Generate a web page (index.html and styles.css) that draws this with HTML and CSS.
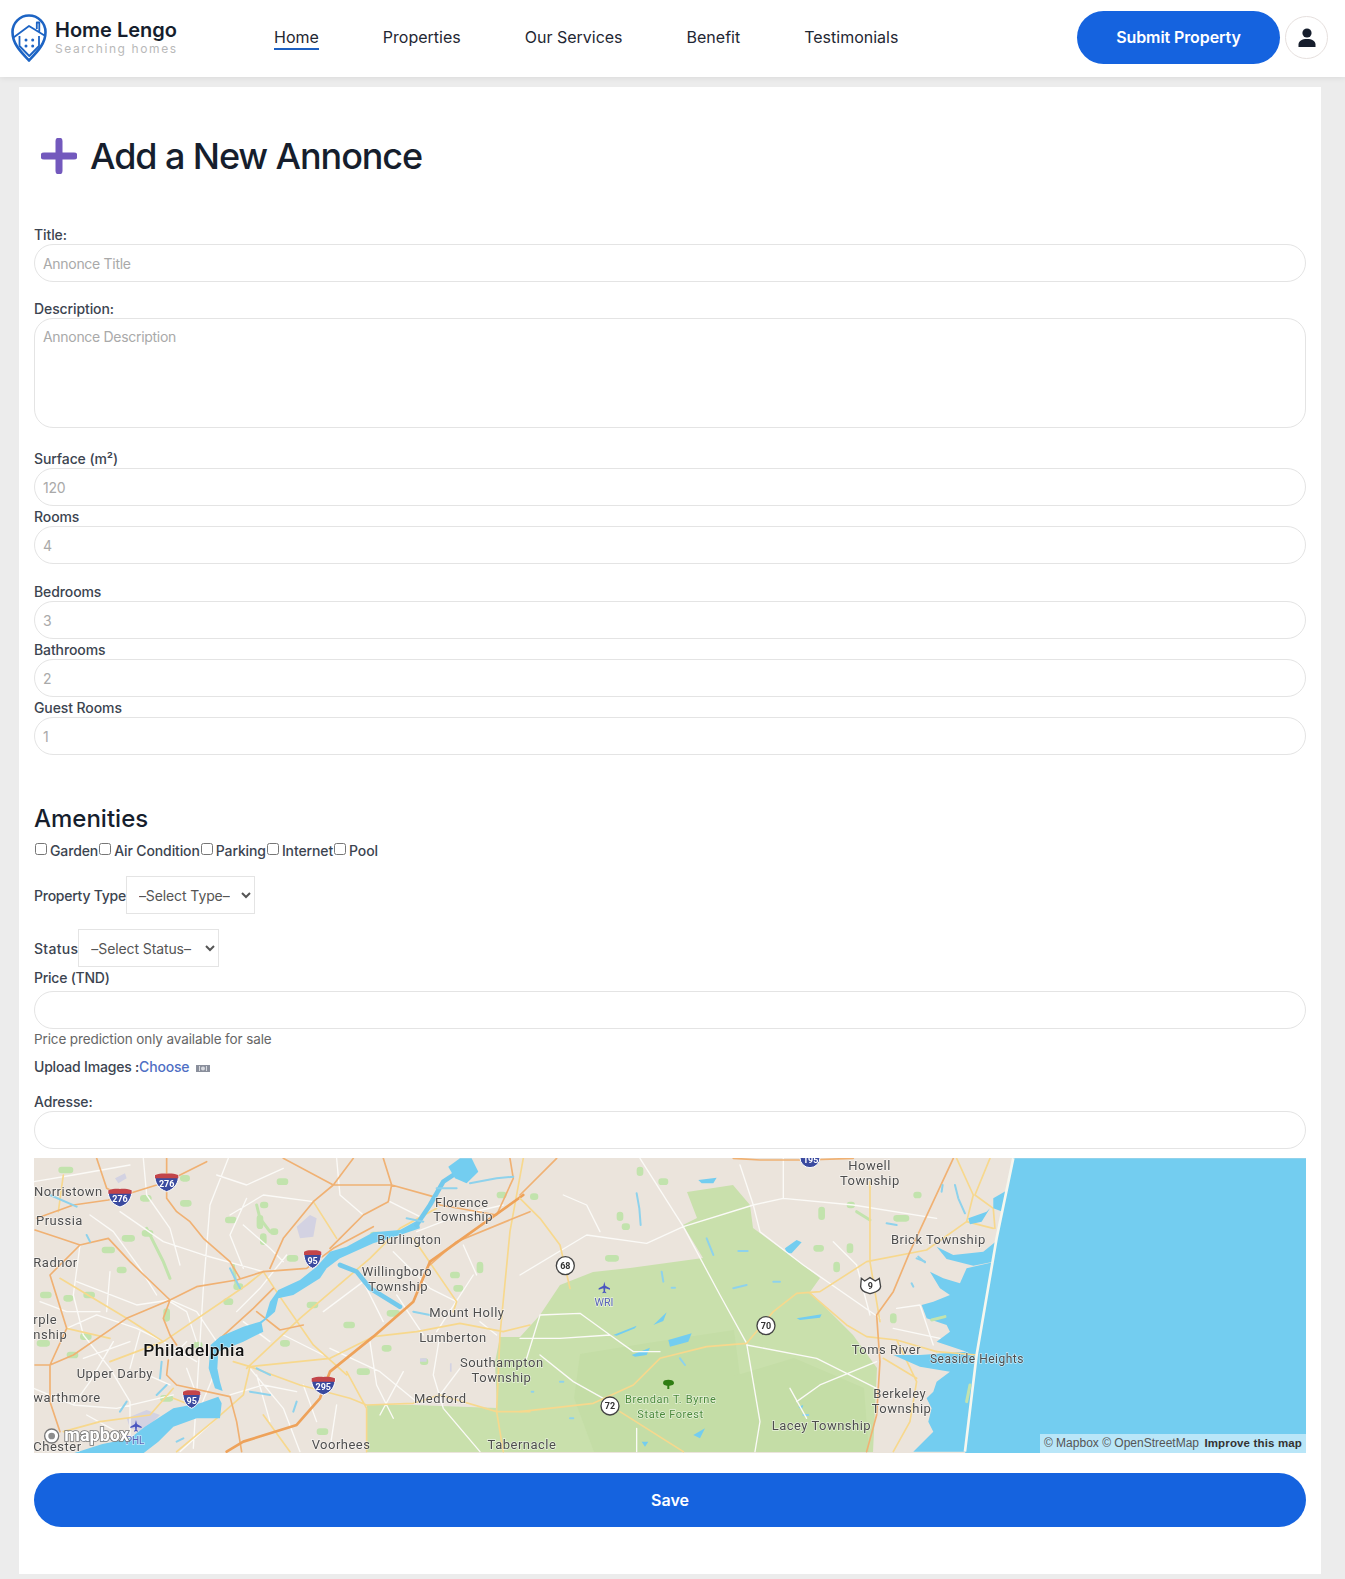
FILE: index.html
```html
<!DOCTYPE html>
<html lang="en">
<head>
    <meta charset="UTF-8">
    <meta name="viewport" content="width=device-width, initial-scale=1.0">
    <title>Home Lengo - Add Annonce</title>
    <link rel="stylesheet" href="styles.css">
</head>
<body>
    <header class="topbar">
        <a class="logo" href="#">
            <svg class="logo-icon" viewBox="0 0 36 48">
                <path class="logo-line" d="M18 46.500C10 38 1.500 30 1.500 18a16.500 16.500 0 0 1 33 0C34.500 30 26 38 18 46.500Z"/>
                <path class="logo-line inner" d="M2.500 23.500 18 12 33.500 21.500M25.800 15V8.500h2.500V19M8.500 22v10l9.800 10 9.700-10V22"/>
                <circle class="logo-dot" cx="15" cy="26" r="1.500"/><circle class="logo-dot" cx="21.700" cy="26" r="1.500"/>
                <circle class="logo-dot" cx="15" cy="32" r="1.500"/><circle class="logo-dot" cx="21.700" cy="32" r="1.500"/>
            </svg>
            <div class="logo-text">
                <div class="logo-name">Home Lengo</div>
                <div class="logo-sub">Searching homes</div>
            </div>
        </a>
        <nav class="nav">
            <a class="nav-link active" href="#">Home</a>
            <a class="nav-link" href="#">Properties</a>
            <a class="nav-link" href="#">Our Services</a>
            <a class="nav-link" href="#">Benefit</a>
            <a class="nav-link" href="#">Testimonials</a>
        </nav>
        <a class="submit-btn" href="#">Submit Property</a>
        <a class="user-btn" href="#">
            <svg viewBox="0 0 20 20" width="20" height="20">
                <circle class="user-shape" cx="10" cy="5" r="4.600"/>
                <path class="user-shape" d="M1.500 19v-2.500C1.500 13 5 11 10 11s8.500 2 8.500 5.500V19Z"/>
            </svg>
        </a>
    </header>

    <main class="card">
        <h1 class="page-title">
            <svg class="plus" viewBox="0 0 36 36"><path d="M18 3v30M3 18h30"/></svg>
            Add a New Annonce
        </h1>

        <form>
            <label class="lbl" for="title">Title:</label>
            <input class="inp" type="text" id="title" placeholder="Annonce Title">

            <label class="lbl gap16" for="desc">Description:</label>
            <textarea class="inp area" id="desc" placeholder="Annonce Description"></textarea>

            <label class="lbl gap20" for="surface">Surface (m²)</label>
            <input class="inp" type="text" id="surface" placeholder="120">
            <label class="lbl" for="rooms">Rooms</label>
            <input class="inp" type="text" id="rooms" placeholder="4">
            <label class="lbl gap17" for="bedrooms">Bedrooms</label>
            <input class="inp" type="text" id="bedrooms" placeholder="3">
            <label class="lbl" for="bathrooms">Bathrooms</label>
            <input class="inp" type="text" id="bathrooms" placeholder="2">
            <label class="lbl" for="guests">Guest Rooms</label>
            <input class="inp" type="text" id="guests" placeholder="1">

            <h2 class="sub-title">Amenities</h2>
            <div class="checks">
                <input type="checkbox" id="a1"><label for="a1">Garden</label>
                <input type="checkbox" id="a2"><label for="a2">Air Condition</label>
                <input type="checkbox" id="a3"><label for="a3">Parking</label>
                <input type="checkbox" id="a4"><label for="a4">Internet</label>
                <input type="checkbox" id="a5"><label for="a5">Pool</label>
            </div>

            <div class="select-row type-row">
                <label for="ptype">Property Type</label>
                <select class="sel" id="ptype"><option>–Select Type–</option></select>
            </div>
            <div class="select-row status-row">
                <label for="pstatus">Status</label>
                <select class="sel" id="pstatus"><option>–Select Status–</option></select>
            </div>

            <label class="lbl price-lbl" for="price">Price (TND)</label>
            <input class="inp" type="text" id="price">
            <p class="hint">Price prediction only available for sale</p>
            <div class="upload">Upload Images :<a class="choose" href="#">Choose</a>
                <svg class="cam" viewBox="0 0 14 8"><path d="M0 1h14v7H0Z"/><circle cx="7" cy="4.500" r="2"/><path class="cam-gap" d="M3.500 2v5M10.500 2v5"/></svg>
            </div>

            <label class="lbl addr-lbl" for="addr">Adresse:</label>
            <input class="inp" type="text" id="addr">

            <div class="map">
                <svg class="map-svg" viewBox="0 0 1272 295">
                    <defs>
                        <g id="i3">
                            <path class="sh-blue" d="M-35-22H35C37 0 25 20 0 28-25 20-37 0-35-22Z"/>
                            <path class="sh-red" d="M-35-22C-20-27-10-27 0-26 10-27 20-27 35-22V-12H-35Z"/>
                        </g>
                        <g id="i2">
                            <path class="sh-blue" d="M-26-22H26C28 0 19 20 0 28-19 20-28 0-26-22Z"/>
                            <path class="sh-red" d="M-26-22C-15-27-8-27 0-26 8-27 15-27 26-22V-12H-26Z"/>
                        </g>
                        <path id="plane" d="M0-17 3-5 17 3V7L3 3 2 12 6 16V18L0 16-6 18V16L-2 12-3 3-17 7V3L-3-5Z"/>
                    </defs>

                    <rect class="land" width="1272" height="295"/>
                    <path class="forest" d="M333 294V247L379 247 463 250 461 204 466 179H486L506 157 526 127 559 114 596 110 669 100 649 67 663 60 653 34 699 27 716 47 719 70 769 107 786 120 776 134 819 177 843 210 839 294Z"/>
                    <path class="forest-dark" d="M546 196 620 184 700 172 716 294H560L540 240Z"/>
                    <path class="forest-dark" d="M700 218 760 200 830 230 835 294H700Z"/>

                    <!-- west half, coords taken from the 3x crop -->
                    <g transform="translate(-4 -3) scale(.3333)">
                        <path class="patch" d="M95 45h25M225 285h20M285 250h20M345 235h15M460 145h15M595 195h15M750 80h15M460 70h10M690 190v22M340 130h15M40 420h15M110 430h10M170 420h15M270 345h10M620 395h10M410 470v20M30 565h20M120 600h15M1030 240h15M1410 120h10M1080 475h20M1270 360h10M1350 330v15M1065 580h10M990 650h20M950 510h15M840 450h15M780 310h15M700 245v15M1180 620h5M590 440h10M500 570h8M760 565h10M160 545h15M700 150h5M730 230h5M400 730h20M870 830h15M1280 400h10"/>
                        <path class="patch thin" d="M350 220 400 320 420 370M680 150 690 190 720 230M610 330 620 400"/>
                        <path class="airport" d="M800 215 840 180 860 190 850 245 810 250ZM290 790 350 765 390 780 340 830 300 820ZM255 70 285 55 290 70 265 85ZM1170 610h20v10h-20ZM1260 625v25h5v-25Z"/>

                        <path class="r-w" d="M595 10 540 150 520 400 490 880M10 80 130 60 300 30M270 170 400 260 520 300 700 350M140 380 320 450 420 435M110 520 200 480 320 520 400 560 500 620M160 610 300 560M150 270 130 420 160 540 240 640 300 740 300 890M330 650 420 690M10 700 130 750 260 760 430 720M470 640 500 720M600 180 700 120 850 140M640 210 720 280 760 320M880 470 1000 380M560 560 500 470 420 435M920 10 930 120 1000 180M1090 290 1200 400 1280 440M900 580 1050 650 1160 740M1000 380 1060 500M1230 540 1210 660 1240 760 1350 890M660 640 760 760 810 890M1160 230 1290 180 1420 150M1330 360 1220 530M450 890 560 790M340 10 350 120 420 220 450 330M180 180 250 230 330 340 380 420M30 440 110 470 210 470M240 350 230 470M560 60 650 90 760 40M650 130 600 240 640 340M770 300 690 400 620 470M420 440 470 470 500 560M250 560 180 680 130 750M330 530 300 640M420 610 470 560M560 640 510 760M680 660 720 800M600 720 700 690 800 710M170 780 260 830M760 540 880 600M1020 560 1040 690 1090 790M1100 420 1180 540M1290 640 1230 720M820 690 860 800M920 750 900 880M1120 650 1050 780M1350 500 1400 540M1300 270 1340 360M1080 140 1180 190M720 560 640 500"/>
                        <path class="r-y" d="M1480 10 1440 230 1410 540 1400 770 1420 890M1500 510 1420 530 1290 505 1160 530 1030 545 900 610 660 635 610 620M660 635 640 720 560 790 440 890M660 635 810 690 960 730 1010 750 1150 745 1230 720 1400 770 1500 770M950 650 1010 760 1010 890M1220 160 1110 220 1020 310 810 490 650 640M700 350 760 440 850 570 950 660M90 370 290 490 400 560M110 520 240 550M850 140 920 250M1150 250 1280 440 1270 470M100 60 85 170M560 780 430 730M240 620 400 560 650 390 700 350M430 700 360 780 210 800 100 830M780 890 700 780"/>
                        <path class="r-o" d="M200 10 230 100 270 120M15 225 90 250 150 270 235 250 300 320 420 435 500 395 620 375 700 350 830 340 910 280 1030 215M20 190 130 150 235 135 380 90 420 75 530 20M410 10 410 130 440 170 480 200 520 250 600 320 630 370M760 10 910 90 1085 90 1210 125 1230 150M970 10 910 90 850 140 760 250 720 340M1060 10 1085 90 1075 140 1000 180 900 280M150 270 60 360 110 520 60 630 60 740 90 830M15 630 60 630 130 600 290 490 420 435M420 435 400 490 420 540 440 570M415 615 410 660 440 690 600 725 620 800 635 890M1500 170 1280 260 1200 330M680 470 750 525 820 510M730 400 670 460 560 560M1440 10 1450 70 1400 180 1230 150"/>
                        <path class="r-o main" d="M1480 120 1200 320 1150 440 1030 545 900 650 870 730 800 810 640 860 590 890"/>

                        <path class="water" d="M1165 195 1110 225 1030 232 950 275 900 290 860 335 810 375 745 405 720 440 705 490 690 500 640 515 570 545 542 570 536 640 555 700 578 708 570 680 562 640 565 590 640 560 700 530 695 505 735 470 745 430 790 420 870 370 890 340 930 310 1030 265 1110 240 1170 220Z"/>
                        <path class="water" d="M130 895 215 868 300 850 345 815 430 760 510 745 565 725 575 745 570 790 500 790 430 815 385 860 340 895Z"/>
                        <path class="river" d="M1160 210 1200 150 1240 80 1300 40M930 330 980 350 1020 400 1110 455"/>
                        <path class="river thin" d="M1150 470 1200 480M60 120 140 155M170 240 180 260M600 340 630 400M395 620 390 670M380 720 410 690M270 770 290 740M660 710 720 720M720 660 680 640M800 740 790 770M460 850 440 860M1130 190 1180 200"/>
                        <path class="water" d="M1255 35 1290 10H1325L1345 50 1310 85 1275 70Z"/>
                        <path class="river thin" d="M1320 85 1400 70 1450 65M1220 100 1280 100"/>
                    </g>

                    <!-- east half -->
                    <g transform="translate(486 -3) scale(.3333)">
                        <path class="patch" d="M360 45v8M425 80h10M40 125h5M300 180v8M315 215h5M265 310h22M990 150h5M905 165v20M1130 190h28M990 275v10M950 330v12M1120 485v10M1190 120h5M890 280h12"/>
                        <path class="patch thin" d="M1010 170 1050 195"/>
                        <path class="water" d="M795 280 830 255 845 262 815 295 800 295ZM535 75 590 68 580 85 545 85ZM830 490 905 478 900 488 840 495ZM280 540 350 512 345 520 290 542ZM400 510 440 472 430 498ZM335 600 390 578 380 600 345 605ZM445 555 515 535 505 560 450 575ZM140 680h15M835 755 850 750 845 765ZM520 840 555 820 540 850ZM365 860 385 860 375 875Z"/>
                        <path class="river thin" d="M350 115 358 160 362 210M560 250 570 275 580 300M655 288h28M640 400 680 390M760 380h20M120 680h10M35 710h5M150 790h10M850 780h15M425 350 430 380M455 398h10M480 610 495 630M1100 205 1130 210M1190 310 1215 320"/>

                        <path class="r-w" d="M360 10 490 215 600 420 680 565 720 800 705 890M490 215 700 150 790 130 1000 150 1250 190M0 360 200 240 380 265 490 215M130 120 200 150 240 230M660 30 700 150 720 230 850 330 1080 490M680 570 890 610 1070 700M900 690 830 740M900 690 1070 620M60 480 180 475 270 540 340 590 420 590M0 550 120 550 270 540M60 480 20 610M790 10 790 130M940 260 1010 330 1050 480M1130 460 1200 450 1240 570M1120 520 1260 550M60 600 160 680 250 730M810 700 860 790M350 890 350 820"/>
                        <path class="r-y" d="M0 130 60 190 120 270 150 400M0 770 220 745 340 690 420 610 560 575 680 565 760 470 830 415 900 410 1040 320 1220 285 1340 200 1420 220M870 415 980 510 1040 545 1130 555 1250 590M300 770 490 890M1050 80 1050 320 1080 500M1130 555 1190 680 1170 800 1120 890M1310 10 1360 120 1340 200M1410 10 1365 120 1420 160 1425 220M1090 610 1190 670"/>
                        <path class="r-o" d="M1300 10 1170 290 1120 410 1070 480 1080 620 1070 780 1040 890M0 120 110 10M640 10 720 15 860 15 1000 10"/>

                        <!-- ocean and the bay behind the barrier island -->
                        <path class="water" d="M1480 10H2400V900H1335L1370 600 1430 250Z"/>
                        <path class="water" d="M1425 320 1340 340 1320 385 1270 370 1230 350 1260 400 1290 420 1240 440 1205 450 1220 490 1280 510 1290 530 1250 560 1340 590 1200 600 1120 600 1200 635 1290 650 1250 680 1240 710 1220 730 1235 760 1225 800 1240 830 1180 890 1340 890 1375 600Z"/>
                        <path class="water" d="M1250 275 1300 300 1390 290 1425 262 1432 318 1360 332 1280 312ZM1345 190 1400 170 1410 160 1385 200 1350 208ZM1420 130 1472 100 1452 172 1420 160Z"/>
                        <path class="river thin" d="M1305 90 1315 130 1335 175M1268 90 1265 110M1195 305 1215 322M1175 385 1180 395"/>
                        <path class="patch thin" d="M1235 495 1275 485"/>
                        <path class="r-y" d="M1250 590 1372 600"/>
                        <path class="barrier" d="M1480 10 1430 250 1370 600 1335 890"/>
                        <path class="patch thin" d="M1340 740 1350 690"/>
                    </g>

                    <!-- shields and labels, west -->
                    <g transform="translate(-4 -3) scale(.3333)">
                        <use href="#i3" x="410" y="82"/><text class="sh-txt" x="410" y="96">276</text>
                        <use href="#i3" x="270" y="128"/><text class="sh-txt" x="270" y="142">276</text>
                        <use href="#i2" x="848" y="312"/><text class="sh-txt" x="848" y="326">95</text>
                        <use href="#i2" x="485" y="732"/><text class="sh-txt" x="485" y="746">95</text>
                        <use href="#i3" x="880" y="692"/><text class="sh-txt" x="880" y="706">295</text>
                        <use class="plane" href="#plane" x="318" y="812"/>

                        <text class="place" x="12" y="124">Norristown</text>
                        <text class="place" x="18" y="210">Prussia</text>
                        <text class="place" x="10" y="336">Radnor</text>
                        <text class="place" x="10" y="506">rple</text>
                        <text class="place" x="10" y="551">nship</text>
                        <text class="place" x="140" y="668">Upper Darby</text>
                        <text class="place" x="10" y="741">warthmore</text>
                        <text class="place" x="10" y="889">Chester</text>
                        <text class="city" x="340" y="602">Philadelphia</text>
                        <text class="place" x="1215" y="155">Florence</text>
                        <text class="place" x="1210" y="199">Township</text>
                        <text class="place" x="1042" y="266">Burlington</text>
                        <text class="place" x="995" y="362">Willingboro</text>
                        <text class="place" x="1015" y="407">Township</text>
                        <text class="place" x="1198" y="486">Mount Holly</text>
                        <text class="place" x="1168" y="561">Lumberton</text>
                        <text class="place" x="1290" y="636">Southampton</text>
                        <text class="place" x="1325" y="681">Township</text>
                        <text class="place" x="1152" y="744">Medford</text>
                        <text class="place" x="845" y="883">Voorhees</text>
                        <text class="place" x="1373" y="881">Tabernacle</text>
                        <text class="air-txt" x="287" y="868">PHL</text>

                        <circle class="mb-ring" cx="65" cy="843" r="21"/>
                        <circle class="mb-core" cx="65" cy="843" r="10"/>
                        <text class="mb-txt" x="103" y="858">mapbox</text>
                    </g>

                    <!-- shields and labels, east -->
                    <g transform="translate(486 -3) scale(.3333)">
                        <circle class="sh-blue" cx="870" cy="8" r="30"/>
                        <text class="sh-txt" x="872" y="24">195</text>
                        <circle class="route" cx="136" cy="332" r="27"/><text class="route-txt" x="136" y="342">68</text>
                        <circle class="route" cx="738" cy="512" r="27"/><text class="route-txt" x="738" y="522">70</text>
                        <circle class="route" cx="270" cy="753" r="27"/><text class="route-txt" x="270" y="763">72</text>
                        <path class="route" d="M1024 370 1034 378 1050 368 1066 378 1078 370 1082 395C1080 412 1060 412 1050 416 1040 412 1024 412 1022 395Z"/>
                        <text class="route-txt" x="1051" y="401">9</text>
                        <use class="plane" href="#plane" x="253" y="397"/>
                        <text class="air-big" x="252" y="453">WRI</text>
                        <path class="tree" d="M430 680C430 672 460 672 461 680 466 690 452 692 448 692V702H442V692C438 692 426 690 430 680Z"/>

                        <text class="place" x="985" y="45">Howell</text>
                        <text class="place" x="960" y="91">Township</text>
                        <text class="place" x="1113" y="267">Brick Township</text>
                        <text class="place" x="995" y="598">Toms River</text>
                        <text class="place small" x="1230" y="625">Seaside Heights</text>
                        <text class="place" x="1060" y="730">Berkeley</text>
                        <text class="place" x="1055" y="775">Township</text>
                        <text class="place" x="755" y="824">Lacey Township</text>
                        <text class="park" x="315" y="745">Brendan T. Byrne</text>
                        <text class="park" x="352" y="788">State Forest</text>
                    </g>
                </svg>
                <div class="attrib">© Mapbox © OpenStreetMap <b>Improve this map</b></div>
            </div>

            <button class="save" type="button">Save</button>
        </form>
    </main>
</body>
</html>
```

FILE: styles.css
```css
*{
    box-sizing: border-box;
}
body{
    margin: 0;
    background: #ececec;
    font-family: "Inter", "Noto Sans", sans-serif;
    color: #1f2733;
}
a{
    text-decoration: none;
    color: inherit;
}

/* header */
.topbar{
    height: 77px;
    background: #fff;
    display: flex;
    align-items: center;
    padding: 0 17px 2px 11px;
    box-shadow: 0 1px 6px rgba(0,0,0,.08);
}
.logo{
    display: flex;
    align-items: center;
    gap: 8px;
    width: 263px;
}
.logo-icon{
    width: 36px;
    height: 48px;
}
.logo-line{
    fill: none;
    stroke: #1d64c4;
    stroke-width: 2.600;
    stroke-linejoin: round;
}
.logo-line.inner{
    stroke-width: 1.800;
}
.logo-dot{
    fill: #1d64c4;
}
.logo-name{
    font-size: 20px;
    font-weight: 600;
    color: #161e2d;
    line-height: 22px;
}
.logo-sub{
    font-size: 12px;
    color: #b9b9b9;
    letter-spacing: 1.600px;
    line-height: 15px;
}
.nav{
    display: flex;
    gap: 64px;
    flex: 1;
}
.nav-link{
    font-size: 16px;
    line-height: 22px;
    color: #1f2733;
    border-bottom: 2px solid transparent;
}
.nav-link.active{
    border-bottom-color: #1c5fc0;
}
.submit-btn{
    width: 203px;
    height: 53px;
    line-height: 53px;
    border-radius: 27px;
    background: #1563df;
    color: #fff;
    text-align: center;
    font-size: 16px;
    font-weight: 600;
    letter-spacing: -.1px;
}
.user-btn{
    width: 43px;
    height: 43px;
    margin-left: 5px;
    border-radius: 50%;
    border: 1px solid #e6e0de;
    display: flex;
    align-items: center;
    justify-content: center;
}
.user-shape{
    fill: #161e2d;
}

/* card */
.card{
    background: #fff;
    margin: 10px 24px 5px 19px;
    padding: 0 15px 47px 15px;
    height: 1487px;
}
.page-title{
    margin: 0;
    height: 137px;
    display: flex;
    align-items: center;
    gap: 13px;
    padding-left: 7px;
    font-size: 36px;
    font-weight: 500;
    letter-spacing: -1.100px;
    color: #161e2d;
}
.plus{
    width: 36px;
    height: 36px;
}
.plus path{
    stroke: #7359bd;
    stroke-width: 7;
    stroke-linecap: round;
    fill: none;
}
.lbl{
    display: block;
    font-size: 14px;
    line-height: 22px;
    height: 20px;
    font-weight: 500;
    letter-spacing: -.1px;
    color: #3c4450;
}
.gap16{
    margin-top: 16px;
}
.gap17{
    margin-top: 17px;
}
.gap20{
    margin-top: 20px;
}
.inp{
    display: block;
    width: 100%;
    height: 38px;
    border: 1px solid #e4e4e4;
    border-radius: 19px;
    padding: 0 8px;
    font-family: inherit;
    font-size: 14px;
    letter-spacing: -.3px;
    background: #fff;
    outline: none;
}
.inp::placeholder{
    color: #a9a9a9;
}
.area{
    height: 110px;
    padding-top: 9px;
    resize: none;
}
.sub-title{
    margin: 49px 0 0;
    font-size: 24px;
    line-height: 30px;
    font-weight: 500;
    color: #161e2d;
}
.checks{
    display: flex;
    align-items: center;
    height: 20px;
    margin-top: 6px;
    font-size: 14px;
    font-weight: 500;
    letter-spacing: -.12px;
    color: #3c4450;
}
.checks input{
    width: 12px;
    height: 12px;
    margin: 0 3px 3px 1px;
}
.select-row{
    display: flex;
    align-items: center;
    font-size: 14px;
    font-weight: 500;
    color: #3c4450;
}
.type-row{
    margin-top: 16px;
    letter-spacing: -.25px;
}
.status-row{
    margin-top: 15px;
    letter-spacing: .3px;
}
.sel{
    height: 38px;
    border: 1px solid #e4e4e4;
    border-radius: 0;
    background: #fff;
    padding: 0 8px;
    font-family: inherit;
    font-size: 14px;
    letter-spacing: -.1px;
    color: #555;
    outline: none;
}
#ptype{
    width: 129px;
}
#pstatus{
    width: 141px;
}
.price-lbl{
    height: 24px;
    letter-spacing: -.25px;
}
.hint{
    margin: 0;
    font-size: 13.500px;
    line-height: 20px;
    letter-spacing: -.12px;
    color: #666;
}
.upload{
    margin-top: 8px;
    font-size: 14px;
    line-height: 20px;
    font-weight: 500;
    letter-spacing: -.2px;
    color: #3c4450;
}
.choose{
    color: #4f6fc4;
}
.cam{
    width: 14px;
    height: 8px;
    margin-left: 3px;
}
.cam path{
    fill: #8a8f9c;
}
.cam circle{
    fill: #d8dae0;
}
.cam .cam-gap{
    fill: none;
    stroke: #d8dae0;
    stroke-width: 1;
}
.addr-lbl{
    margin-top: 14px;
}

/* map */
.map{
    position: relative;
    height: 295px;
    margin-top: 9px;
    overflow: hidden;
}
.map-svg{
    display: block;
    width: 100%;
    height: 295px;
    font-family: "Roboto", "Noto Sans", sans-serif;
    filter: blur(.35px);
}
.land{
    fill: #ebe4dc;
}
.forest{
    fill: #c9e0ac;
}
.forest-dark{
    fill: #c4dda6;
}
.patch{
    fill: none;
    stroke: #c2e3ad;
    stroke-width: 20;
    stroke-linecap: round;
}
.patch.thin{
    stroke-width: 9;
}
.airport{
    fill: #d3d2e2;
}
.r-w,.r-y,.r-o{
    fill: none;
    stroke-linejoin: round;
    stroke-linecap: round;
}
.r-w{
    stroke: #fbfaf7;
    stroke-width: 4;
}
.r-y{
    stroke: #f7d88d;
    stroke-width: 5;
}
.r-o{
    stroke: #f0b173;
    stroke-width: 5;
}
.r-o.main{
    stroke-width: 8;
    stroke: #eea25a;
}
.river{
    fill: none;
    stroke: #73c9ec;
    stroke-width: 14;
    stroke-linejoin: round;
    stroke-linecap: round;
}
.river.thin{
    stroke: #8ed2ec;
    stroke-width: 6;
}
.water{
    fill: #73cdf0;
}
.barrier{
    fill: none;
    stroke: #f6f7ef;
    stroke-width: 8;
}
.sh-blue{
    fill: #3a4a9f;
    stroke: #fff;
    stroke-width: 3;
}
.sh-red{
    fill: #c2444a;
}
.sh-txt{
    fill: #fff;
    font-size: 27px;
    font-weight: 700;
    text-anchor: middle;
}
.route{
    fill: #fff;
    stroke: #444;
    stroke-width: 4;
}
.route-txt{
    fill: #333;
    font-size: 27px;
    font-weight: 700;
    text-anchor: middle;
}
.place,.city,.park,.air-txt,.air-big{
    paint-order: stroke;
    stroke: rgba(255,255,255,.6);
    stroke-width: 4px;
}
.place{
    fill: #4d4d4d;
    font-size: 39px;
    letter-spacing: 1.500px;
}
.place.small{
    font-size: 36px;
}
.city{
    fill: #111;
    font-size: 52px;
    font-weight: 500;
    letter-spacing: 1.500px;
}
.park{
    fill: #4b8a3c;
    font-size: 33px;
    letter-spacing: 1.800px;
}
.air-txt{
    fill: #5a64b8;
    font-size: 30px;
}
.air-big{
    fill: #5a64b8;
    font-size: 32px;
    text-anchor: middle;
}
.plane{
    fill: #4a56c0;
}
.tree{
    fill: #2f7d12;
}
.mb-ring{
    fill: #fff;
    stroke: #777;
    stroke-width: 4;
}
.mb-core{
    fill: #8c8c8c;
}
.mb-txt{
    fill: #fff;
    paint-order: stroke;
    stroke: #777;
    stroke-width: 5px;
    font-size: 54px;
    font-weight: 700;
}
.attrib{
    position: absolute;
    right: 0;
    bottom: 0;
    height: 19px;
    line-height: 19px;
    padding: 0 4px;
    background: rgba(255,255,255,.5);
    font-family: "Liberation Sans", Arial, sans-serif;
    font-size: 12px;
    color: #555;
    white-space: nowrap;
}
.attrib b{
    margin-left: 2px;
    font-size: 11.500px;
    color: #333;
    letter-spacing: .15px;
}
.save{
    display: block;
    width: 100%;
    height: 54px;
    margin-top: 20px;
    border: 0;
    border-radius: 27px;
    background: #1563df;
    color: #fff;
    font-family: inherit;
    font-size: 16px;
    font-weight: 600;
}
```
